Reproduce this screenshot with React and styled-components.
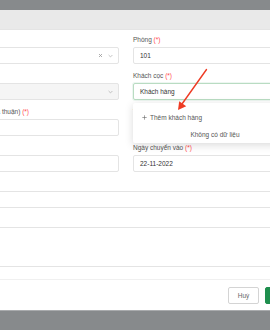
import React from 'react';
import styled, { createGlobalStyle } from 'styled-components';

const Global = createGlobalStyle`
  html, body { margin: 0; padding: 0; }
  body { font-family: "Liberation Sans", Arial, sans-serif; }
`;

const Backdrop = styled.div`
  position: relative;
  width: 270px;
  height: 330px;
  overflow: hidden;
  box-sizing: border-box;
  padding-top: 10px;
  background: #878a8c;
`;

const Modal = styled.div`
  width: 382px;
  height: 300px;
  margin-left: -73px;
  background: #fff;
  display: flex;
  flex-direction: column;
  box-shadow: 0 1px 0 #a9abad;
`;

const Header = styled.div`
  height: 20px;
  box-sizing: border-box;
  background: #e9e9e9;
  border-bottom: 1px solid #e4e4e4;
`;

const Body = styled.div`
  flex: 1;
  display: grid;
  grid-template-columns: 180px 164px;
  grid-auto-rows: max-content;
  column-gap: 14px;
  row-gap: 7px;
  padding: 5px 12px 0;
`;

const Field = styled.div`
  position: relative;
  grid-column: ${(p) => (p.$wide ? '1 / -1' : 'auto')};
`;

const Label = styled.div`
  height: 10px;
  line-height: 10px;
  margin-bottom: 2px;
  font-size: 6.5px;
  color: #555;
  white-space: nowrap;
`;

const Req = styled.span`
  color: #ff4d4f;
`;

const Box = styled.div`
  height: ${(p) => (p.$tall ? '40px' : '17px')};
  box-sizing: border-box;
  border: 1px solid ${(p) => (p.$active ? '#b9dcc2' : '#e4e4e4')};
  border-radius: 2px;
  background: ${(p) => (p.$disabled ? '#f5f5f5' : '#fff')};
  box-shadow: ${(p) => (p.$active ? '0 0 0 1px rgba(31,143,78,0.08)' : 'none')};
  padding: 0 5px 0 6px;
  display: flex;
  align-items: center;
  font-size: 6.5px;
  color: #333;
`;

const Icons = styled.div`
  margin-left: auto;
  display: flex;
  align-items: center;
  gap: 5px;
  color: #aaa;
`;

const Dropdown = styled.div`
  position: absolute;
  top: calc(100% + 3px);
  left: 0;
  width: 100%;
  z-index: 2;
  background: #fff;
  border-radius: 2px;
  box-shadow: 0 2px 8px rgba(0, 0, 0, 0.15);
  padding: 4px 0 2px;
`;

const AddItem = styled.div`
  height: 20px;
  display: flex;
  align-items: center;
  gap: 3px;
  padding-left: 9px;
  font-size: 6.5px;
  color: #555;
`;

const Empty = styled.div`
  height: 12px;
  line-height: 12px;
  margin-top: 2px;
  text-align: center;
  font-size: 6.5px;
  color: #555;
`;

const Footer = styled.div`
  height: 31px;
  box-sizing: border-box;
  border-top: 1px solid #f0f0f0;
  display: flex;
  align-items: center;
  justify-content: flex-end;
  gap: 6px;
  padding: 0 12px;
`;

const Button = styled.button`
  width: ${(p) => (p.$primary ? '32px' : '31px')};
  height: 17px;
  box-sizing: border-box;
  border-radius: 2px;
  border: 1px solid ${(p) => (p.$primary ? '#1f8f4e' : '#d4d4d4')};
  background: ${(p) => (p.$primary ? '#1f8f4e' : '#fff')};
  color: ${(p) => (p.$primary ? '#fff' : '#666')};
  font-family: inherit;
  font-size: 6.5px;
  padding: 0;
`;

const Annotation = styled.svg`
  position: absolute;
  left: 0;
  top: 0;
  pointer-events: none;
  z-index: 5;
`;

const Chevron = () => (
  <svg width="5" height="4" viewBox="0 0 5 4">
    <path d="M0.6 1 L2.5 2.9 L4.4 1" fill="none" stroke="#aaa" strokeWidth="0.7" />
  </svg>
);

const Clear = () => (
  <svg width="5" height="5" viewBox="0 0 5 5">
    <path d="M1 1 L4 4 M4 1 L1 4" fill="none" stroke="#999" strokeWidth="0.8" />
  </svg>
);

const Plus = () => (
  <svg width="5" height="5" viewBox="0 0 5 5">
    <path d="M2.5 0.3 V4.7 M0.3 2.5 H4.7" fill="none" stroke="#666" strokeWidth="0.6" />
  </svg>
);

export default function App() {
  return (
    <>
      <Global />
      <Backdrop>
        <Modal>
          <Header />
          <Body>
            <Field>
              <Label>Tòa nhà <Req>(*)</Req></Label>
              <Box>
                Nhà A
                <Icons><Clear /><Chevron /></Icons>
              </Box>
            </Field>
            <Field>
              <Label>Phòng <Req>(*)</Req></Label>
              <Box>101</Box>
            </Field>
            <Field>
              <Label>Tầng</Label>
              <Box $disabled>
                <Icons><Chevron /></Icons>
              </Box>
            </Field>
            <Field>
              <Label>Khách cọc <Req>(*)</Req></Label>
              <Box $active>Khách hàng</Box>
              <Dropdown>
                <AddItem><Plus />Thêm khách hàng</AddItem>
                <Empty>Không có dữ liệu</Empty>
              </Dropdown>
            </Field>
            <Field>
              <Label>Giá thuê phòng (thoả thuận) <Req>(*)</Req></Label>
              <Box />
            </Field>
            <Field>
              <Label>Tiền cọc</Label>
              <Box />
            </Field>
            <Field>
              <Label>Ngày cọc</Label>
              <Box />
            </Field>
            <Field>
              <Label>Ngày chuyển vào <Req>(*)</Req></Label>
              <Box>22-11-2022</Box>
            </Field>
            <Field $wide>
              <Label>Số người</Label>
              <Box />
            </Field>
            <Field $wide>
              <Label>Ghi chú</Label>
              <Box $tall />
            </Field>
          </Body>
          <Footer>
            <Button>Huỷ</Button>
            <Button $primary>Lưu</Button>
          </Footer>
        </Modal>
        <Annotation width="270" height="330" viewBox="0 0 270 330">
          <line x1="206.5" y1="69.5" x2="182" y2="104" stroke="#ee3b24" strokeWidth="1.4" strokeLinecap="round" />
          <path d="M178 110 L179.2 101.2 L186.2 106.2 Z" fill="#ee3b24" />
        </Annotation>
      </Backdrop>
    </>
  );
}
